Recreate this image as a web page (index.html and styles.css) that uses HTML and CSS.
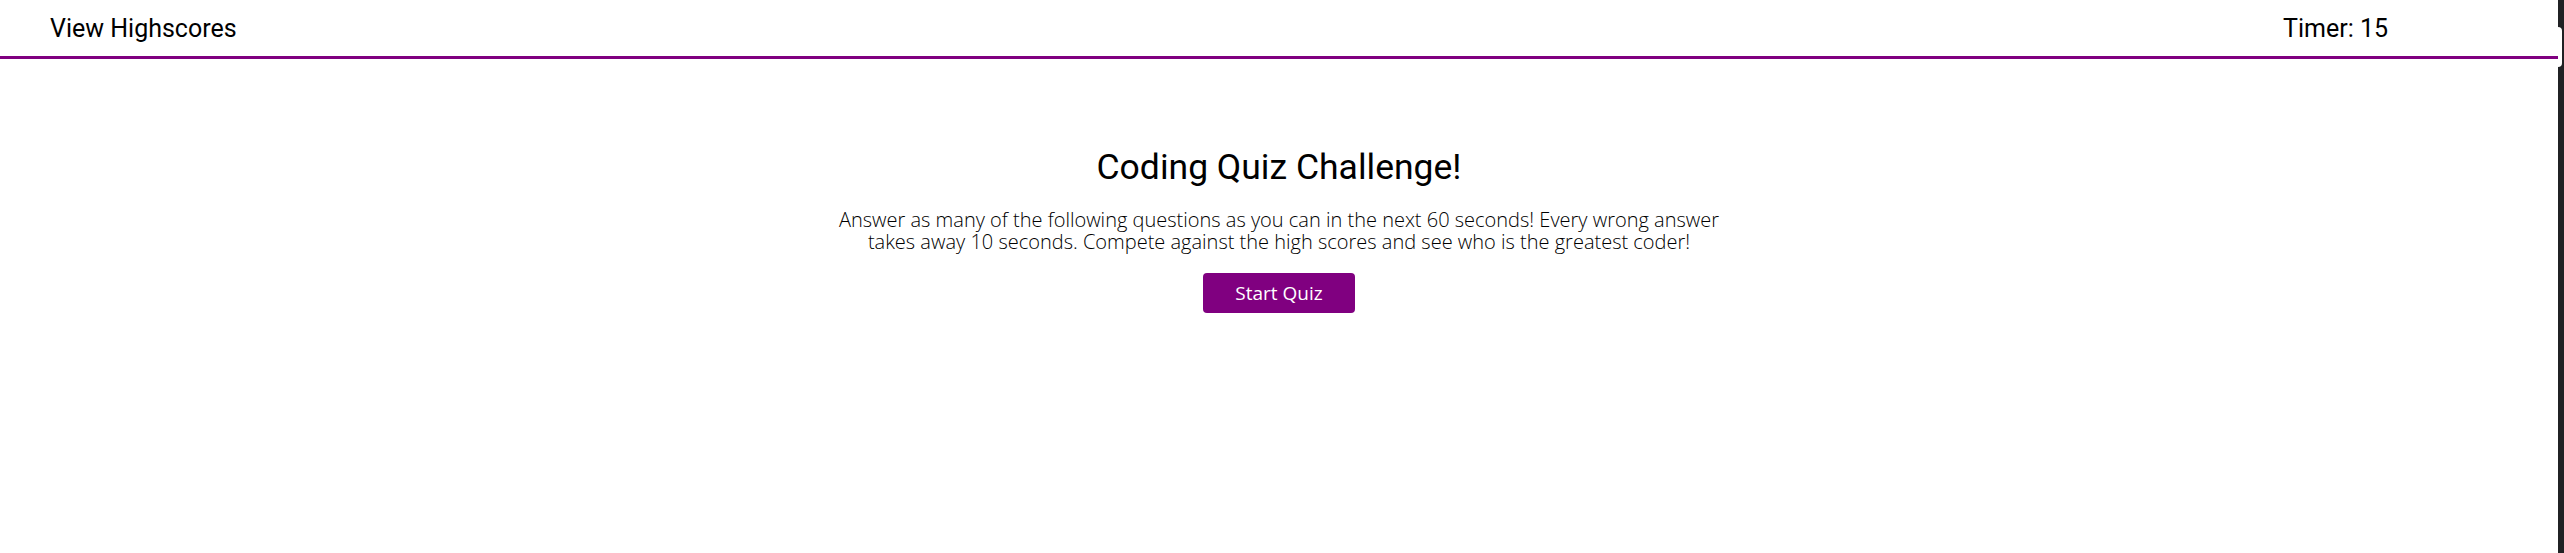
FILE: index.html
```html
<!DOCTYPE html>
<html lang="en">
<head>
<meta charset="utf-8">
<title>Coding Quiz Challenge</title>
<link rel="stylesheet" href="styles.css">
</head>
<body>
  <div class="page">
    <header class="topbar">
      <a class="highscores">View Highscores</a>
      <div class="timer">Timer: <span>15</span></div>
    </header>
    <main class="intro">
      <h1 class="title">Coding Quiz Challenge!</h1>
      <p class="desc">Answer as many of the following questions as you can in the next 60 seconds! Every wrong answer takes away 10 seconds. Compete against the high scores and see who is the greatest coder!</p>
      <button class="start">Start Quiz</button>
    </main>
  </div>
  <div class="edge"><div class="notch"></div></div>
</body>
</html>
```

FILE: styles.css
```css
html, body {
  margin: 0;
  padding: 0;
  height: 100%;
}
body {
  display: flex;
  background: #ffffff;
  min-height: 100vh;
}
.page {
  flex: 1;
  display: flex;
  flex-direction: column;
}
.topbar {
  height: 56px;
  display: flex;
  align-items: center;
  justify-content: space-between;
  padding: 0 170px 0 50px;
  border-bottom: 3px solid #800080;
  font-family: Roboto, "Liberation Sans", sans-serif;
  font-size: 25px;
  color: #000;
}
.highscores {
  color: #000;
  text-decoration: none;
}
.intro {
  display: flex;
  flex-direction: column;
  align-items: center;
  padding-top: 87px;
}
.title {
  margin: 0;
  font-family: Roboto, "Liberation Sans", sans-serif;
  font-weight: 400;
  font-size: 35.5px;
  color: #000;
}
.desc {
  margin: 21px 0 0;
  max-width: 900px;
  text-align: center;
  font-family: "Open Sans", "Liberation Sans", sans-serif;
  font-weight: 300;
  font-size: 20px;
  line-height: 21.6px;
  color: #000;
}
.start {
  margin-top: 21px;
  height: 40px;
  padding: 0 32px;
  border: none;
  border-radius: 4px;
  background: #800080;
  color: #fff;
  font-family: "Open Sans", "Liberation Sans", sans-serif;
  font-size: 19px;
  cursor: pointer;
}
.edge {
  width: 6px;
  background: #202124;
}
.notch {
  margin-top: 27px;
  width: 4px;
  height: 40px;
  background: #ffffff;
  border-radius: 0 5px 5px 0;
}
```
